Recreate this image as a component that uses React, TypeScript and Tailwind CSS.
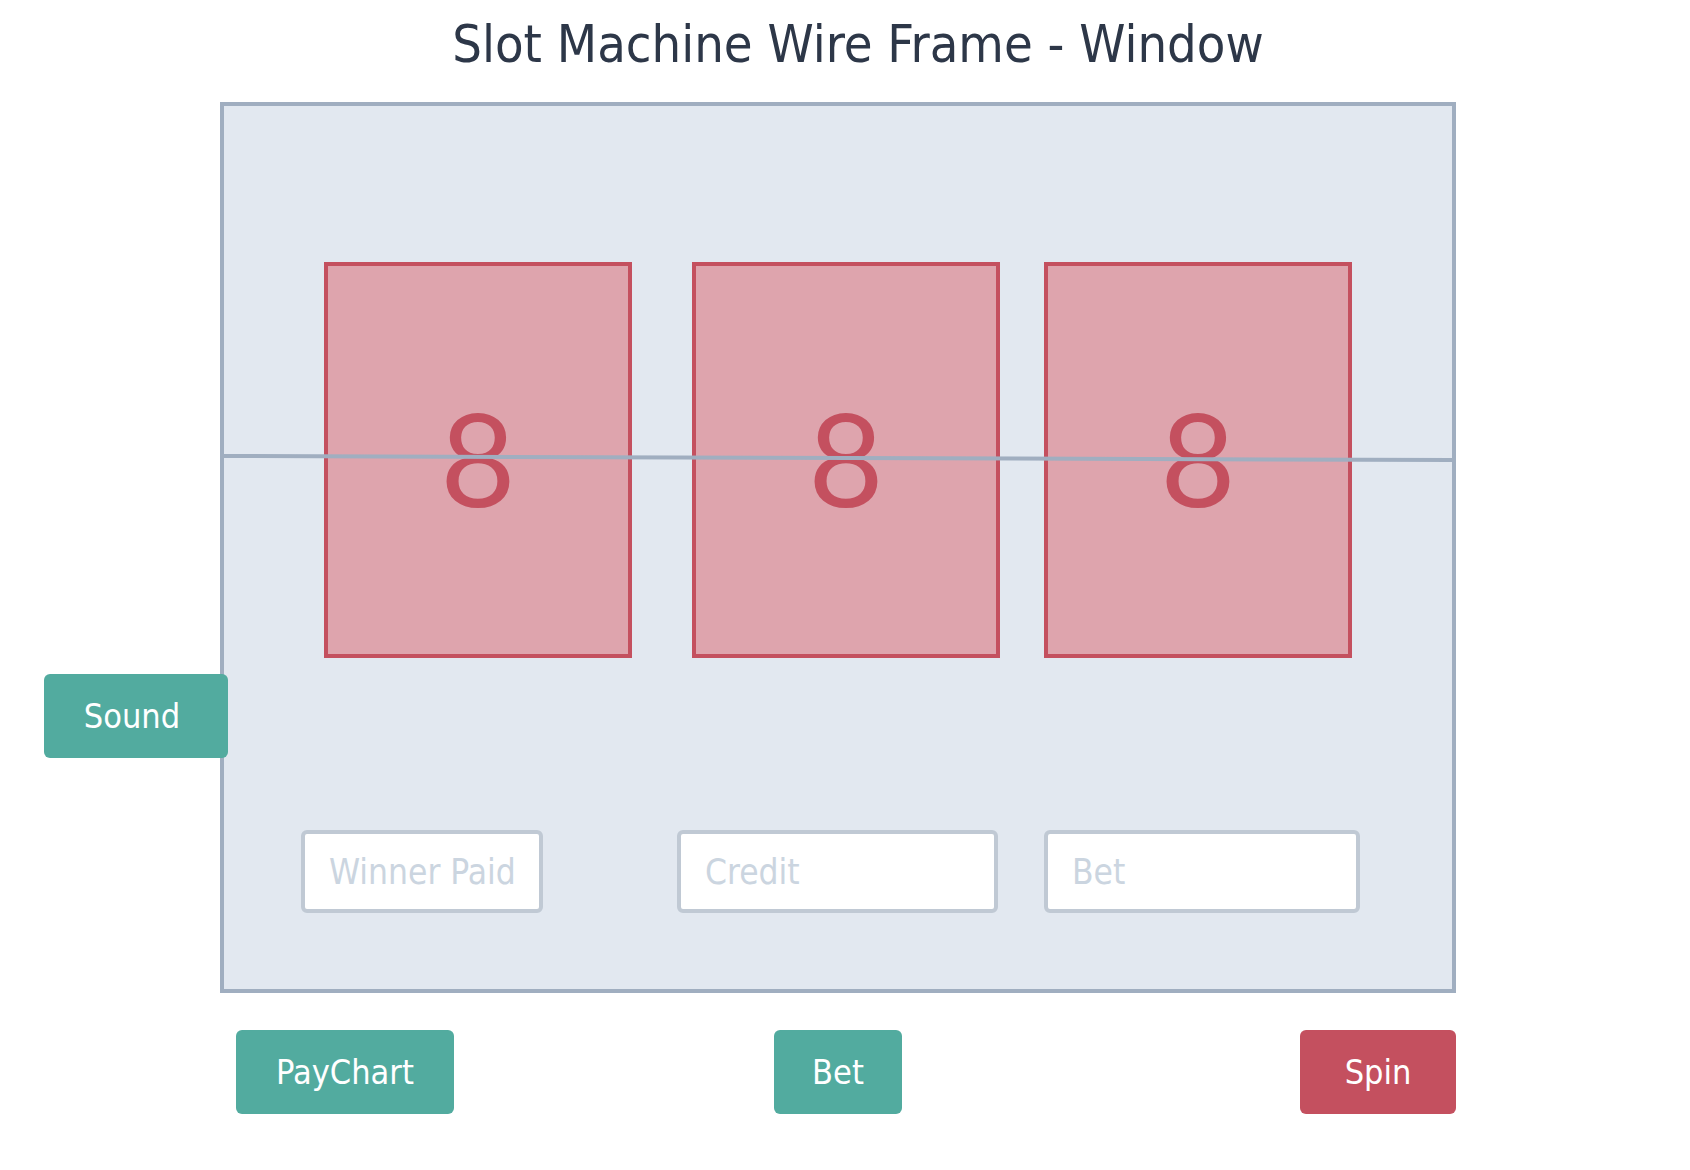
import type { FC } from "react";

const din = "font-['DejaVu_Sans_Condensed','DejaVu_Sans',sans-serif] font-stretch-condensed";

type ButtonProps = {
  label: string;
  className: string;
};

const ActionButton: FC<ButtonProps> = ({ label, className }) => (
  <button
    className={`flex h-[84px] items-center justify-center rounded-[6px] text-[34px] text-white ${din} ${className}`}
  >
    {label}
  </button>
);

const Reel: FC<{ className: string }> = ({ className }) => (
  <div
    className={`flex h-[396px] w-[308px] shrink-0 items-center justify-center border-4 border-[#c4505f] bg-[#dea4ad] pb-[6px] ${className}`}
  >
    <span className="font-['Lato',sans-serif] text-[130px] font-normal leading-none text-[#c4505f]">8</span>
  </div>
);

type FieldProps = {
  placeholder: string;
  className: string;
};

const Field: FC<FieldProps> = ({ placeholder, className }) => (
  <input
    type="text"
    placeholder={placeholder}
    className={`h-[83px] shrink-0 rounded-[6px] border-4 border-[#c0c9d4] bg-white pl-[24px] text-[35px] text-[#4a5568] outline-none placeholder:text-[#cbd5e0] ${din} ${className}`}
  />
);

export default function App() {
  return (
    <div className="min-h-[1170px] w-[1690px] bg-white">
      {/* Title */}
      <div className="flex justify-center pl-[26px] pt-[18px]">
        <h1 className={`text-[52px] leading-none text-[#2d3748] ${din}`}>
          Slot Machine Wire Frame - Window
        </h1>
      </div>

      {/* Sound + machine window */}
      <div className="mt-[32px] flex items-start">
        <ActionButton
          label="Sound"
          className="relative z-10 -mr-[8px] ml-[44px] mt-[572px] w-[184px] shrink-0 bg-[#52ab9f] pr-[8px]"
        />

        <div className="relative h-[891px] w-[1236px] shrink-0 border-4 border-[#a0aec0] bg-[#e2e8f0]">
          <div className="flex pt-[156px]">
            <Reel className="ml-[100px]" />
            <Reel className="ml-[60px]" />
            <Reel className="ml-[44px]" />
          </div>

          <div className="mt-[172px] flex">
            <Field placeholder="Winner Paid" className="ml-[77px] w-[242px]" />
            <Field placeholder="Credit" className="ml-[134px] w-[321px]" />
            <Field placeholder="Bet" className="ml-[46px] w-[316px]" />
          </div>

          {/* pay line */}
          <svg
            className="pointer-events-none absolute left-0 top-0"
            width="1228"
            height="883"
            viewBox="0 0 1228 883"
          >
            <line x1="0" y1="350" x2="1228" y2="354" stroke="#a0aec0" strokeWidth="4" />
          </svg>
        </div>
      </div>

      {/* Bottom controls */}
      <div className="mt-[37px] flex">
        <ActionButton label="PayChart" className="ml-[236px] w-[218px] bg-[#52ab9f]" />
        <ActionButton label="Bet" className="ml-[320px] w-[128px] bg-[#52ab9f]" />
        <ActionButton label="Spin" className="ml-[398px] w-[156px] bg-[#c4505f]" />
      </div>
    </div>
  );
}
